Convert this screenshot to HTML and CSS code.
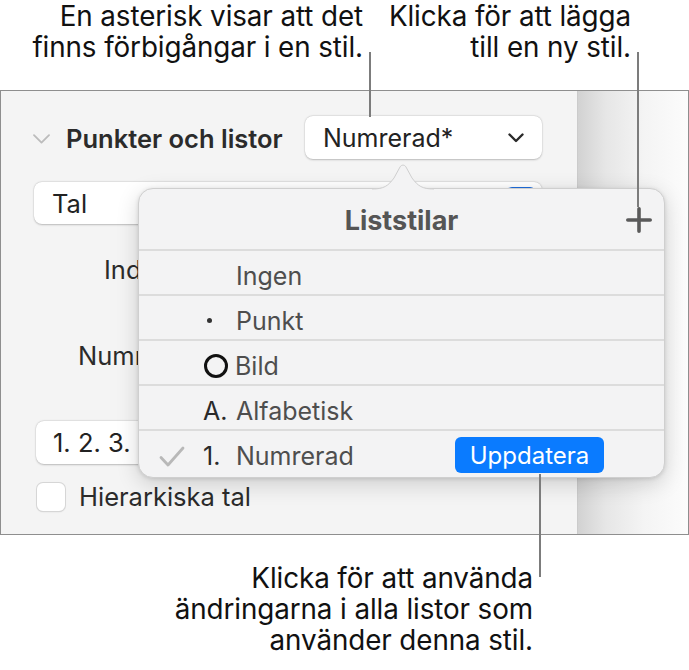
FILE: index.html
```html
<!DOCTYPE html>
<html lang="sv">
<head>
<meta charset="utf-8">
<title>Liststilar</title>
<link rel="stylesheet" href="styles.css">
</head>
<body>
<div class="page">
  <div class="top-callouts">
    <p class="callout callout-left">En asterisk visar att det<br>finns förbigångar i en stil.</p>
    <p class="callout callout-right">Klicka för att lägga<br>till en ny stil.</p>
  </div>

  <div class="frame">
    <div class="inspector">
      <div class="section-row">
        <svg class="disclosure" width="17" height="10" viewBox="0 0 17 10"><path d="M1 1.2 L8.5 8.6 L16 1.2" fill="none" stroke="#bcbcbc" stroke-width="1.8" stroke-linecap="round" stroke-linejoin="round"/></svg>
        <span class="section-title">Punkter och listor</span>
        <div class="popup style-popup">
          <span>Numrerad*</span>
          <svg width="16" height="10" viewBox="0 0 16 10"><path d="M1.5 1.5 L8 8 L14.5 1.5" fill="none" stroke="#2a2a2a" stroke-width="2.4" stroke-linecap="round" stroke-linejoin="round"/></svg>
        </div>
      </div>
      <div class="popup type-popup">
        <span>Tal</span>
        <span class="blue-arrows"></span>
      </div>
      <div class="label-row row-ind">Indrag:</div>
      <div class="label-row row-num">Numrering:</div>
      <div class="popup num-popup"><span>1. 2. 3. 4.</span></div>
      <div class="check-row">
        <span class="checkbox"></span>
        <span class="check-label">Hierarkiska tal</span>
      </div>
    </div>
    <div class="side"></div>
  </div>

  <p class="callout callout-bottom">Klicka för att använda<br>ändringarna i alla listor som<br>använder denna stil.</p>

  <div class="popover">
    <svg class="popover-arrow" width="62" height="27" viewBox="0 0 62 27">
      <path d="M0 26 C12 26 16 23 22 15 L28 4 C29.5 1.5 32.5 1.5 34 4 L40 15 C46 23 50 26 62 26" fill="#f3f3f4" stroke="#cfcfcf" stroke-width="1"/>
    </svg>
    <div class="popover-header">
      <span class="popover-title">Liststilar</span>
      <svg class="plus" width="26" height="26" viewBox="0 0 26 26"><path d="M13 1.8 V24.2 M1.8 13 H24.2" stroke="#5a5a5a" stroke-width="3.6" stroke-linecap="round"/></svg>
    </div>
    <ul class="style-list">
      <li class="style-item"><span class="check"></span><span class="marker"></span><span class="name">Ingen</span></li>
      <li class="style-item"><span class="check"></span><span class="marker"><span class="dot"></span></span><span class="name">Punkt</span></li>
      <li class="style-item"><span class="check"></span><span class="marker"><span class="ring"></span></span><span class="name name-tight">Bild</span></li>
      <li class="style-item"><span class="check"></span><span class="marker">A.</span><span class="name">Alfabetisk</span></li>
      <li class="style-item">
        <span class="check"><svg width="26" height="21" viewBox="0 0 26 21"><path d="M2 11.5 L9 19 L24 2" fill="none" stroke="#b8b8b8" stroke-width="2.8" stroke-linecap="round" stroke-linejoin="round"/></svg></span>
        <span class="marker">1.</span><span class="name">Numrerad</span>
        <span class="update-btn">Uppdatera</span>
      </li>
    </ul>
  </div>

  <div class="leader leader-1"></div>
  <div class="leader leader-2"></div>
  <div class="leader leader-3"></div>
</div>
</body>
</html>
```

FILE: styles.css
```css
* { box-sizing: border-box; }

html, body {
  margin: 0;
  padding: 0;
  background: #ffffff;
}

body {
  font-family: Inter, "Noto Sans", "Liberation Sans", sans-serif;
  color: #1a1a1a;
}

.page {
  position: relative;
  width: 689px;
  height: 670px;
  overflow: hidden;
}

/* ---------- callouts ---------- */
.top-callouts {
  display: flex;
  height: 90px;
  padding-top: 1px;
}

.callout {
  margin: 0;
  font-size: 27.8px;
  line-height: 31px;
  text-align: right;
  color: #111;
  letter-spacing: -0.1px;
}

.callout-left { width: 363px; }
.callout-right { width: 268px; }

.callout-bottom {
  width: 533px;
  margin-top: 28px;
}

.leader {
  position: absolute;
  width: 2px;
  background: #7c7c7c;
}
.leader-1 { left: 369px; top: 52px; height: 65px; }
.leader-2 { left: 637px; top: 52px; height: 155px; }
.leader-3 { left: 539px; top: 474px; height: 103px; }

/* ---------- frame ---------- */
.frame {
  display: flex;
  height: 445px;
  border: 1px solid #8e8e8e;
}

.inspector {
  width: 577px;
  background: #f4f4f4;
  border-right: 1px solid #cbcbcb;
  padding: 25px 35px 0 33px;
  display: flex;
  flex-direction: column;
}

.side {
  flex: 1;
  background: linear-gradient(to right, #d2d2d2 0%, #e6e6e6 25%, #f4f4f4 60%, #fcfcfc 100%);
}

.section-row {
  display: flex;
  align-items: center;
  height: 43px;
}

.disclosure {
  margin-left: -1px;
  margin-top: 2px;
}

.section-title {
  margin-left: 16px;
  margin-top: 2px;
  font-size: 25.5px;
  font-weight: 600;
  color: #2b2b2b;
}

.popup {
  display: flex;
  align-items: center;
  background: #ffffff;
  border-radius: 8px;
  box-shadow: 0 0.5px 2px rgba(0, 0, 0, 0.22), 0 0 0 0.5px rgba(0, 0, 0, 0.06);
  font-size: 25.5px;
  color: #222;
}

.style-popup {
  margin-left: auto;
  width: 237px;
  height: 43px;
  padding: 0 18px 0 18px;
  justify-content: space-between;
  font-size: 25px;
}

.type-popup {
  margin-top: 23px;
  height: 42px;
  padding: 0 6px 0 18px;
  justify-content: space-between;
}

.blue-arrows {
  width: 30px;
  height: 32px;
  border-radius: 6px;
  background: #1f6fe0;
}

.label-row {
  height: 44px;
  display: flex;
  align-items: center;
  font-size: 25.5px;
  color: #2b2b2b;
}

.row-ind { margin-top: 23px; padding-left: 70px; }
.row-num { margin-top: 42px; padding-left: 44px; }

.num-popup {
  margin-top: 44px;
  margin-left: 2px;
  width: 200px;
  height: 43px;
  padding-left: 17px;
}

.check-row {
  margin-top: 18px;
  display: flex;
  align-items: center;
  height: 29px;
}

.checkbox {
  width: 28px;
  height: 28px;
  margin-left: 3px;
  background: #fff;
  border-radius: 6px;
  box-shadow: 0 0 0 1px #d6d6d6, 0 0.5px 1.5px rgba(0,0,0,0.15);
}

.check-label {
  margin-left: 14px;
  font-size: 25.5px;
  color: #2b2b2b;
}

/* ---------- popover ---------- */
.popover {
  position: absolute;
  left: 138px;
  top: 188px;
  width: 527px;
  height: 290px;
  background: #f3f3f4;
  border: 1px solid #cfcfcf;
  border-radius: 15px;
  box-shadow: 0 6px 22px rgba(0, 0, 0, 0.16), 0 1px 4px rgba(0, 0, 0, 0.12);
}

.popover-arrow {
  position: absolute;
  left: 233px;
  top: -26px;
}

.popover-header {
  position: relative;
  height: 62px;
  display: flex;
  align-items: center;
  justify-content: center;
  border-bottom: 2px solid #dcdcdc;
  padding-top: 2px;
}

.popover-title {
  font-size: 27px;
  font-weight: 700;
  color: #555555;
}

.plus {
  position: absolute;
  right: 12px;
  top: 18px;
}

.style-list {
  list-style: none;
  margin: 0;
  padding: 0;
}

.style-item {
  display: flex;
  align-items: center;
  height: 45px;
  padding-top: 6px;
  border-bottom: 2px solid #dcdcdc;
  font-size: 25px;
  color: #4e4e4e;
}

.style-item:last-child {
  border-bottom: none;
  height: 44px;
}

.check {
  width: 64px;
  display: flex;
  justify-content: flex-end;
  padding-right: 18px;
  padding-top: 0;
}

.marker {
  width: 33px;
  display: flex;
  align-items: center;
  color: #2a2a2a;
}

.dot {
  width: 5px;
  height: 5px;
  margin-left: 4px;
  border-radius: 50%;
  background: #333;
}

.ring {
  width: 24px;
  height: 24px;
  margin-left: 1px;
  border: 3.5px solid #111;
  border-radius: 50%;
}

.name-tight { margin-left: -1px; }

.update-btn {
  margin-left: auto;
  margin-right: 60px;
  width: 149px;
  height: 36px;
  margin-top: -2px;
  display: flex;
  align-items: center;
  justify-content: center;
  background: #0a7bff;
  color: #ffffff;
  border-radius: 6px;
  font-size: 24px;
}
```
